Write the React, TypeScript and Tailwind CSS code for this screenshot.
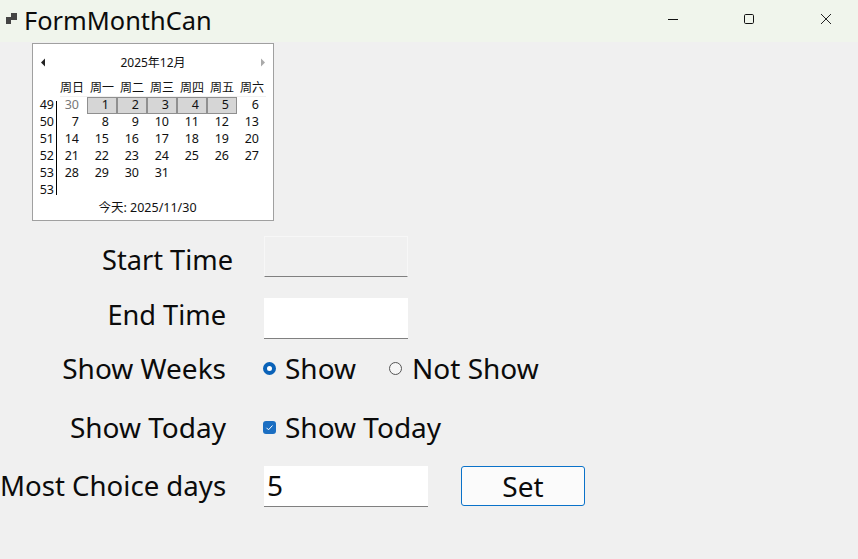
const sans = "font-['Noto_Sans','Noto_Sans_CJK_SC',sans-serif]";

const heads = ["周日", "周一", "周二", "周三", "周四", "周五", "周六"];
const weeks: { w: string; days: (number | null)[] }[] = [
  { w: "49", days: [30, 1, 2, 3, 4, 5, 6] },
  { w: "50", days: [7, 8, 9, 10, 11, 12, 13] },
  { w: "51", days: [14, 15, 16, 17, 18, 19, 20] },
  { w: "52", days: [21, 22, 23, 24, 25, 26, 27] },
  { w: "53", days: [28, 29, 30, 31, null, null, null] },
  { w: "53", days: [null, null, null, null, null, null, null] },
];

function Calendar() {
  return (
    <div className="ml-8 mt-px w-[242px] h-[178px] bg-white border border-[#a0a0a0] flex flex-col text-[12.5px] leading-[16px] text-[#111] font-['Noto_Sans','Noto_Sans_CJK_SC',sans-serif]">
      <div className="h-[36px] flex items-center justify-between pl-[7px] pr-[7px] pt-[1px]">
        <svg width="6" height="9" viewBox="0 0 6 9"><path d="M5 0.5V8.5L1 4.5Z" fill="#222" /></svg>
        <span className="text-[12px]">2025年12月</span>
        <svg width="6" height="9" viewBox="0 0 6 9"><path d="M1 0.5V8.5L5 4.5Z" fill="#aaa" /></svg>
      </div>
      <div className="flex h-[15px] pl-[24px] pt-[1px] items-center">
        {heads.map((h) => (
          <div key={h} className="w-[30px] text-center whitespace-nowrap text-[12px]">{h}</div>
        ))}
      </div>
      <div className="ml-[27px] mr-[7px] mt-px h-px bg-[#f0f0f0]" />
      <div className="flex">
        <div className="w-[24px] flex flex-col relative">
          <div className="absolute right-0 top-[4px] bottom-[4px] w-px bg-black" />
          {weeks.map((r, i) => (
            <div key={i} className="h-[17px] pr-[3px] text-right">{r.w}</div>
          ))}
        </div>
        <div className="flex flex-col">
          {weeks.map((r, i) => (
            <div key={i} className="flex h-[17px]">
              {r.days.map((d, j) => {
                const sel = i === 0 && j >= 1 && j <= 5;
                return (
                  <div
                    key={j}
                    className={
                      "w-[30px] h-[17px] text-right " +
                      (sel ? "pr-[7px] " : "pr-[8px] ") +
                      (sel ? "bg-[#d6d6d6] border border-[#8f8f8f] leading-[14px] " : "") +
                      (i === 0 && j === 0 ? "text-[#777]" : "")
                    }
                  >
                    {d}
                  </div>
                );
              })}
            </div>
          ))}
        </div>
      </div>
      <div className="text-center mt-px pr-[11px]">今天: 2025/11/30</div>
    </div>
  );
}

function Label({ w, children }: { w: string; children: string }) {
  return <div className={w + " shrink-0 text-right whitespace-nowrap"}>{children}</div>;
}

export default function App() {
  return (
    <div className={"w-[858px] h-[559px] overflow-hidden bg-[#f0f0f0] text-[#0b0b0b] " + sans}>
      <div className="h-[42px] bg-[#f0f5ec] flex items-center">
        <svg className="ml-[6px] -mt-[4px]" width="12" height="12" viewBox="0 0 12 12">
          <rect x="0" y="4" width="5" height="7" fill="#444" />
          <rect x="5" y="0" width="6" height="7" fill="#444" />
        </svg>
        <span className="ml-[6px] text-[25.4px] leading-none">FormMonthCan</span>
        <div className="ml-auto flex items-center pr-[27px] mb-1">
          <svg width="10" height="10" viewBox="0 0 10 10"><path d="M0 5.5H10" stroke="#111" /></svg>
          <svg className="ml-[66px]" width="10" height="10" viewBox="0 0 10 10"><rect x="0.5" y="0.5" width="9" height="9" rx="1.2" fill="none" stroke="#111" /></svg>
          <svg className="ml-[67px]" width="10" height="10" viewBox="0 0 10 10"><path d="M0 0L10 10M10 0L0 10" stroke="#222" /></svg>
        </div>
      </div>
      <Calendar />
      <div className="text-[28px] leading-[36px]">
        <div className="flex items-center mt-[15px] h-[41px] text-[27.2px]">
          <div className="w-[233px] shrink-0 text-right whitespace-nowrap pt-[6px]">Start Time</div>
          <div className="ml-[31px] w-[144px] h-[41px] border border-[#f7f7f7] border-b-[#808080]" />
        </div>
        <div className="flex items-center mt-[21px] h-[41px] text-[27.2px]">
          <div className="w-[226px] shrink-0 text-right whitespace-nowrap pb-[8px]">End Time</div>
          <div className="ml-[38px] w-[144px] h-[41px] bg-white border-b border-[#808080]" />
        </div>
        <div className="flex items-center mt-[11px] h-[36px]">
          <Label w="w-[226px]">Show Weeks</Label>
          <div className="ml-[37px] size-[13px] rounded-full border-[4px] border-[#0a62b8] bg-white" />
          <span className="ml-[9px]">Show</span>
          <div className="ml-[33px] size-[13px] rounded-full border border-[#555] bg-[#f6f6f6]" />
          <span className="ml-[10px]">Not Show</span>
        </div>
        <div className="flex items-center mt-[23px] h-[36px]">
          <Label w="w-[226px]">Show Today</Label>
          <div className="ml-[37px] size-[13px] rounded-[3px] bg-[#1b6ec2] flex items-center justify-center">
            <svg width="9" height="9" viewBox="0 0 9 9"><path d="M1.5 4.8L3.5 6.8L7.5 2.5" fill="none" stroke="#fff" strokeWidth="1" /></svg>
          </div>
          <span className="ml-[9px]">Show Today</span>
        </div>
        <div className="flex items-start mt-[21px] h-[41px]">
          <div className="w-[226px] shrink-0 text-right whitespace-nowrap text-[27.6px] leading-[39px]">Most Choice days</div>
          <div className="ml-[38px] w-[164px] h-[41px] bg-white border-b border-[#808080] pl-[3px] leading-[39px]">5</div>
          <button className="ml-[33px] w-[124px] h-[40px] bg-[#fbfbfb] border border-[#0a72c9] rounded-[3px] text-center leading-[36px]">Set</button>
        </div>
      </div>
    </div>
  );
}
